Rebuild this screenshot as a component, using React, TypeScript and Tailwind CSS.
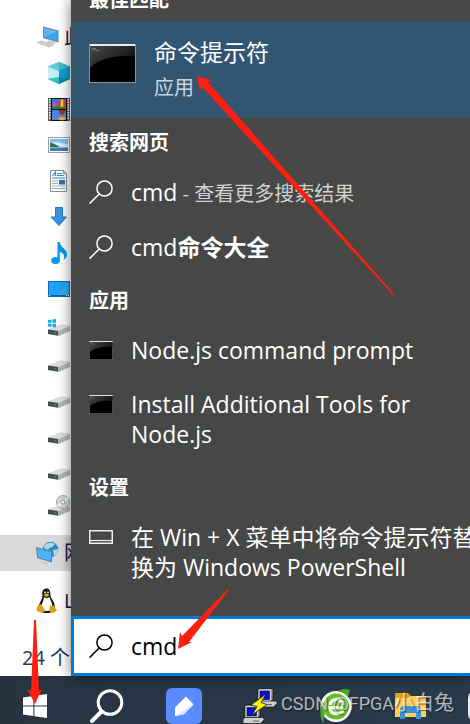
import { useState } from "react";
import type { ReactNode } from "react";

function TerminalIcon({ className }: { className: string }) {
  return (
    <svg viewBox="0 0 47 39" preserveAspectRatio="none" className={className} aria-hidden="true">
      <defs>
        <linearGradient id="gloss" x1="0" y1="0" x2="1" y2=".6">
          <stop offset="0" stopColor="#4a4a4a" />
          <stop offset="1" stopColor="#101010" />
        </linearGradient>
      </defs>
      <rect width="47" height="39" fill="#8d969c" />
      <rect x="1" width="45" height="2" fill="#e6eaec" />
      <rect x="1" y="2" width="45" height="36" fill="#000" />
      <path d="M1 2h45v10C26 11 9 15 1 24z" fill="url(#gloss)" />
      <path d="M3 5h2M6 4v2M7.500 6.500h2" stroke="#aaa" strokeWidth=".8" />
    </svg>
  );
}

function SearchGlyph({ className, strokeWidth = 2 }: { className: string; strokeWidth?: number }) {
  return (
    <svg viewBox="0 0 24 24" fill="none" stroke="currentColor" strokeWidth={strokeWidth} className={className} aria-hidden="true">
      <circle cx="15.5" cy="8.5" r="7.6" />
      <path d="M10.2 14 .5 23.6" />
    </svg>
  );
}

function KeyboardIcon() {
  return (
    <svg viewBox="0 0 24 14" fill="none" stroke="#eee" className="h-3.5 w-6" aria-hidden="true">
      <rect x=".75" y=".75" width="22.5" height="12.5" strokeWidth="1.5" />
      <path d="M1 10.5h22" strokeWidth="1.2" />
    </svg>
  );
}

function PcIcon() {
  return (
    <svg viewBox="0 0 24 24" className="h-6 w-6" aria-hidden="true">
      <path d="M7 1.500 22.500 5.500v12L7 13z" fill="#777f86" />
      <path d="m8 3 13.500 3.500V16L8 12.200z" fill="#35a6f5" />
      <path d="M8 3 21.500 6.500 8 12z" fill="#7ac4fa" opacity=".6" />
      <path d="m12 15 8 2-2 2.500-7-2z" fill="#c3ccd2" />
      <path d="m0 18 6-2.500 12 4.500-5 2.500z" fill="#b3bac0" />
      <path d="m2 18 10 3.500M5 17l10 3.500" stroke="#eef2f4" strokeWidth=".8" />
    </svg>
  );
}

function CubeIcon() {
  return (
    <svg viewBox="0 0 24 24" className="h-6 w-6" aria-hidden="true">
      <path d="m11 1 11 4.500V18l-11 5-11-5V5.500z" fill="#1ba9c4" />
      <path d="M11 1v9L0 5.500z" fill="#5fcbd6" />
      <path d="m11 1 11 4.500L11 10z" fill="#3fbccb" />
      <path d="m0 5.500 11 4.500v7L0 18z" fill="#c4eff0" />
      <path d="m11 10 11-4.500V18l-11-1z" fill="#0f9fd3" />
      <path d="m0 18 11-2v7z" fill="#35bfc4" />
      <path d="m11 16 11 2-11 5z" fill="#0f8a9a" />
    </svg>
  );
}

function FilmIcon() {
  return (
    <svg viewBox="0 0 24 24" className="h-6 w-6" aria-hidden="true">
      <rect y="1" width="22" height="23" fill="#555" />
      <path d="M1.700 2v21M20.300 2v21" stroke="#fff" strokeWidth="1.600" strokeDasharray="1.600 1" />
      <rect x="3" y="1" width="16" height="23" fill="#111" />
      <rect x="4" y="2" width="14" height="10" fill="#2c7be5" />
      <rect x="4" y="13" width="14" height="10" fill="#3b8bf0" />
      <path d="M4 10c4-2 8-1 14 0v2H4z" fill="#2f7f45" />
      <circle cx="6.500" cy="7.500" r="2.300" fill="#e24a8a" />
      <circle cx="14" cy="6.300" r="3.700" fill="#e53d2a" />
      <path d="M14 2.600v7.400" stroke="#ffd21f" strokeWidth="2.500" />
      <path d="M10.500 13h7c0 3-2 4-3.500 5-1.500-1-3.500-2-3.500-5z" fill="#b7252c" />
      <ellipse cx="14" cy="21.500" rx="3.500" ry="1.800" fill="#f3b51d" />
      <circle cx="6" cy="20.500" r="1.500" fill="#f15d30" />
    </svg>
  );
}

function PictureIcon() {
  return (
    <svg viewBox="0 0 24 24" className="h-6 w-6" aria-hidden="true">
      <rect x=".5" y="4.500" width="21" height="15" fill="#fff" stroke="#9aa0a4" />
      <rect x="2" y="6" width="18" height="12" fill="#84bdee" />
      <path d="M2 11c4-3 7-2 11-1s4 1 7 1v4H2z" fill="#d7ebf8" />
      <path d="M2 10c4 0 6 2 10 4H2z" fill="#2e6f5c" />
      <path d="M2 14.500h18V18H2z" fill="#3f80a6" />
    </svg>
  );
}

function DocumentIcon() {
  return (
    <svg viewBox="0 0 24 24" className="h-6 w-6" aria-hidden="true">
      <path d="M2.500 1.500h13l3 3v18h-16z" fill="#fff" stroke="#8c9094" />
      <path d="M15.500 1.500v3h3" fill="none" stroke="#8c9094" />
      <path d="m4.500 7 3-4v4M9 4.500h5M9 6.500h7M4 9h13" stroke="#2b8fd8" strokeWidth="1.200" fill="none" />
      <path d="M4 12h6M4 14.500h6M4 17h13M4 19.500h13" stroke="#a4a7a9" />
      <rect x="11" y="11" width="6" height="4.500" fill="#3472ae" />
    </svg>
  );
}

function DownloadIcon() {
  return (
    <svg viewBox="0 0 24 24" className="h-6 w-6" aria-hidden="true">
      <path d="M7.500 2.500h7v9.500h4L11 20.500 3 12h4.500z" fill="#3b95e4" stroke="#2379c7" />
    </svg>
  );
}

function MusicIcon() {
  return (
    <svg viewBox="0 0 24 24" className="h-6 w-6" aria-hidden="true">
      <ellipse cx="7.500" cy="19.500" rx="4.300" ry="3.500" fill="#0a98ee" />
      <path d="M9.500 1h2.300c0 5 7.200 7 7.200 12 0 3-1 4.500-3.500 6 2-5-.5-7-3.700-8v9H9.500z" fill="#0a98ee" />
    </svg>
  );
}

function DesktopIcon() {
  return (
    <svg viewBox="0 0 24 24" className="h-6 w-6" aria-hidden="true">
      <rect x=".5" y="4.500" width="21" height="15" fill="#21a3f8" stroke="#0d6cb4" />
      <path d="M21 5v13H10z" fill="#45b5ff" opacity=".5" />
      <path d="M1 18.500h20" stroke="#0b5b98" />
      <path d="M1 18.500h1M18 18.500h1M20 18.500h1" stroke="#fff" />
    </svg>
  );
}

function DriveIcon({ badge }: { badge?: "windows" | "disc" }) {
  return (
    <svg viewBox="0 0 24 24" className="h-6 w-6" aria-hidden="true">
      <path d="m0 16.500 13-5 9 1.500v5l-11 5-11-2z" fill="#b4b5b8" />
      <path d="m0 16.500 13-5 9 1.500-11.500 5z" fill="#dcdde0" />
      <path d="m0 16.500 10 1.500v4.500L0 21z" fill="#48494b" />
      <path d="M6.500 20h2" stroke="#35c535" strokeWidth="1.200" />
      {badge === "windows" && (
        <path d="m0 7 3.500-.5v3.300H0zM4.500 6.400 8 6v3.800H4.500zM0 10.700h3.500V14L0 13.500zM4.500 10.700H8v3.900l-3.500-.5z" fill="#11aef2" />
      )}
      {badge === "disc" && (
        <>
          <circle cx="15" cy="9" r="6.500" fill="#d3d9da" stroke="#9fa6a8" />
          <path d="m15 9 5-4M15 9l-5 4" stroke="#f4f6f6" strokeWidth="2" />
          <circle cx="15" cy="9" r="2" fill="#fff" stroke="#959b9d" />
        </>
      )}
    </svg>
  );
}

function NetworkIcon() {
  return (
    <svg viewBox="0 0 24 24" className="h-6 w-6" aria-hidden="true">
      <circle cx="14.500" cy="8.500" r="7.800" fill="#348ab9" />
      <path d="M8 5c3-4 8-4 11-2l-3 3-3 1-1 2-4-2zM17 9l5-1c0 4-2 6-4 7z" fill="#a5dbed" />
      <path d="m0 6 16 4v11.500L1 17z" fill="#6c7c88" />
      <path d="m1 7.300 14 3.600v9.300L2 16.200z" fill="#4cb3f8" />
      <path d="m5 20 7 1.500v2l-7-1z" fill="#c5ced4" />
    </svg>
  );
}

function TuxIcon() {
  return (
    <svg viewBox="0 0 24 26" className="h-[26px] w-6" aria-hidden="true">
      <path d="M6.500 7c-1-4 1-6.500 4-6.500s4 2.500 4 6.500 5 7 4.500 13c0 3-3 5-8.500 5S2.500 23 2.500 20c0-5 4-8 4-13z" fill="#151515" />
      <path d="M8 9c2 1.500 3.500 1.500 5.500 0 1 4 3 6 3 10 0 3-3 4-6 4s-5-1-5-4c0-4 2.500-6 2.500-10z" fill="#fff" />
      <circle cx="9" cy="4.500" r="1.100" fill="#ccc" />
      <circle cx="12" cy="4.500" r="1.100" fill="#ccc" />
      <path d="m7.500 7 3-1.500 3 1.500-3 2.300z" fill="#eeb01b" />
      <path d="m2 17 3-1 4 6c0 2-2 3-4 2.500L.5 23c-.5-2 1-3 1.500-6z" fill="#d6a11c" />
      <path d="m14 17 2 1.500 2.500-1.500.5 3 2 2c-1 1-3 3-5.500 3-2.500 0-2-4-1.500-8z" fill="#d6a11c" />
    </svg>
  );
}

const TREE: { id: string; icon: ReactNode }[] = [
  { id: "objects", icon: <CubeIcon /> },
  { id: "videos", icon: <FilmIcon /> },
  { id: "pictures", icon: <PictureIcon /> },
  { id: "documents", icon: <DocumentIcon /> },
  { id: "downloads", icon: <DownloadIcon /> },
  { id: "music", icon: <MusicIcon /> },
  { id: "desktop", icon: <DesktopIcon /> },
  { id: "c", icon: <DriveIcon badge="windows" /> },
  { id: "d", icon: <DriveIcon /> },
  { id: "e", icon: <DriveIcon /> },
  { id: "f", icon: <DriveIcon /> },
  { id: "g", icon: <DriveIcon /> },
  { id: "dvd", icon: <DriveIcon badge="disc" /> },
];

function RootNode({ icon, label, selected }: { icon: ReactNode; label: string; selected?: boolean }) {
  return (
    <li className={selected ? "flex h-9 items-center gap-1 bg-[#d9d9d9] pl-9" : "flex h-9 items-center gap-1 pl-9"}>
      <span className="shrink-0">{icon}</span>
      <span className="whitespace-nowrap text-xl text-[#101540]">{label}</span>
    </li>
  );
}

function Explorer() {
  return (
    <aside className="flex w-[71px] shrink-0 flex-col overflow-hidden bg-white pt-[19px]">
      <ul>
        <RootNode icon={<PcIcon />} label="此电脑" />
        {TREE.map((t) => (
          <li key={t.id} className="flex h-9 items-center pl-12">
            <span className="shrink-0">{t.icon}</span>
          </li>
        ))}
      </ul>
      <ul className="flex flex-col gap-3 pt-3">
        <RootNode icon={<NetworkIcon />} label="网络" selected />
        <RootNode icon={<TuxIcon />} label="Linux" />
      </ul>
      <p className="mt-auto h-9 whitespace-nowrap pl-[22px] text-xl leading-9 text-[#1e3958]">24 个项目</p>
    </aside>
  );
}

function GroupTitle({ children }: { children: ReactNode }) {
  return <h2 className="flex h-[49px] items-center pl-[18px] text-xl font-bold">{children}</h2>;
}

function ResultRow({ icon, children }: { icon: ReactNode; children: ReactNode }) {
  return (
    <button type="button" className="flex w-full items-start gap-[18px] whitespace-nowrap pb-3.5 pl-[18px] pt-2.5 text-left text-[23px] leading-[30px]">
      <span className="flex h-[30px] w-6 shrink-0 items-center">{icon}</span>
      <span>{children}</span>
    </button>
  );
}

function SearchPanel() {
  const [query, setQuery] = useState("cmd");
  return (
    <main className="z-10 flex min-w-0 flex-1 flex-col bg-linear-to-r from-[#454748] to-[#484745] text-white shadow-[0_0_12px_rgba(0,0,0,0.55)]">
      <div className="flex flex-1 flex-col overflow-hidden">
        <div className="flex h-[22px] shrink-0 items-end overflow-hidden pl-[18px]">
          <h2 className="pb-2 text-xl font-bold leading-7">最佳匹配</h2>
        </div>
        <button type="button" className="flex h-24 w-full items-start gap-[18px] bg-[#325672] pl-[18px] pt-3.5 text-left">
          <TerminalIcon className="mt-2 h-[39px] w-[47px]" />
          <span className="flex flex-col">
            <span className="text-[23px] leading-8">命令提示符</span>
            <span className="mt-1 text-xl leading-8 text-[#cbd5dd]">应用</span>
          </span>
        </button>

        <GroupTitle>搜索网页</GroupTitle>
        <ResultRow icon={<SearchGlyph className="h-6 w-6" strokeWidth={1.5} />}>
          cmd<span className="text-xl text-[#d0d0d0]"> - 查看更多搜索结果</span>
        </ResultRow>
        <ResultRow icon={<SearchGlyph className="h-6 w-6" strokeWidth={1.5} />}>
          cmd<b>命令大全</b>
        </ResultRow>

        <GroupTitle>应用</GroupTitle>
        <ResultRow icon={<TerminalIcon className="h-[19px] w-6" />}>Node.js command prompt</ResultRow>
        <ResultRow icon={<TerminalIcon className="h-[19px] w-6" />}>
          Install Additional Tools for
          <br />
          Node.js
        </ResultRow>

        <GroupTitle>设置</GroupTitle>
        <ResultRow icon={<KeyboardIcon />}>
          在 Win + X 菜单中将命令提示符替
          <br />
          换为 Windows PowerShell
        </ResultRow>
      </div>

      <label className="flex h-[60px] shrink-0 items-center gap-[18px] border-y-[3px] border-l-[3px] border-[#0078d7] bg-white pl-[15px] text-black">
        <SearchGlyph className="h-6 w-6 shrink-0" strokeWidth={1.5} />
        <input
          type="text"
          aria-label="搜索"
          value={query}
          onChange={(e) => setQuery(e.target.value)}
          className="h-full min-w-0 flex-1 bg-transparent text-[23px] outline-none"
        />
      </label>
    </main>
  );
}

function PuttyComputer() {
  return (
    <>
      <path d="M3 1.500 5 .5h13v11l-2 1.500H3z" fill="#9a9a9a" stroke="#111" strokeWidth=".7" />
      <path d="M3.500 1.500H16V13H3.500z" fill="#d6d6d6" />
      <rect x="5" y="3" width="9.500" height="8.500" fill="#0810d8" stroke="#111" strokeWidth=".6" />
      <path d="m1 15 2-2h17l2 .5v2L18.500 19H1z" fill="#cfcfcf" stroke="#111" strokeWidth=".7" />
      <path d="M11 16.500h6" stroke="#444" strokeWidth=".8" />
    </>
  );
}

function Taskbar() {
  return (
    <nav className="flex h-12 shrink-0 items-center gap-10 overflow-hidden bg-linear-to-r from-[#273341] to-[#293b4b] pl-[22px] text-white">
      <button type="button" aria-label="开始" className="mt-3 shrink-0">
        <svg viewBox="0 0 26 26" className="h-[26px] w-[26px]" aria-hidden="true">
          <path d="M1 4.400 11.400 3v9.400H1zM12.400 2.800 25 1v11.400H12.400zM1 13.500h10.400V23L1 21.600zM12.400 13.500H25V25l-12.600-1.800z" fill="#fff" />
        </svg>
      </button>
      <button type="button" aria-label="搜索" className="ml-0.5 mt-3 shrink-0">
        <svg viewBox="0 0 34 34" fill="none" stroke="#fff" className="h-[34px] w-[34px]" aria-hidden="true">
          <circle cx="20" cy="13.500" r="11.800" strokeWidth="3" />
          <path d="M11.500 22.500 2 32" strokeWidth="4" strokeLinecap="round" />
        </svg>
      </button>
      <button type="button" aria-label="笔记" className="ml-0.5 mt-3 flex h-9 w-9 shrink-0 items-center justify-center rounded-md bg-[#5b8bff]">
        <svg viewBox="0 0 20 22" className="h-[22px] w-5" aria-hidden="true">
          <path d="M12 1.500 19.500 9.500 9.500 19.500 1 21V12.500z" fill="#fff" />
          <path d="M19.500 9.500 9.500 19.500 1 21z" fill="#dce5ff" />
        </svg>
      </button>
      <button type="button" aria-label="PuTTY" className="mt-3 shrink-0">
        <svg viewBox="0 0 36 36" className="h-9 w-9" aria-hidden="true">
          <g transform="translate(13 0)"><PuttyComputer /></g>
          <g transform="translate(0 16.500)"><PuttyComputer /></g>
          <path d="M24 6 9 17l6 1.500L10 27l15-10.500-6-2z" fill="#fff200" stroke="#222" strokeWidth=".8" />
        </svg>
      </button>
      <button type="button" aria-label="浏览器" className="mt-3 shrink-0">
        <svg viewBox="0 0 36 36" className="h-9 w-9" aria-hidden="true">
          <circle cx="18" cy="18.500" r="15.500" fill="#fff" />
          <circle cx="18" cy="18.500" r="13" fill="#63bd29" />
          <path d="M25 19.500H12c0 7 9 8 13 3M12 17c1-7.500 12-7.500 13 0" fill="none" stroke="#fff" strokeWidth="3.200" />
          <path d="M20 3c4-2 8-3 12-1-1 3-1 5-3 8 0-4-3-6-9-7z" fill="#48ad20" />
          <path d="M4 15C1 25 3 33 6 35c-1-4 0-7 1-9z" fill="#48ad20" />
        </svg>
      </button>
      <button type="button" aria-label="文件资源管理器" className="mt-3 shrink-0">
        <svg viewBox="0 0 34 30" className="h-[30px] w-[34px]" aria-hidden="true">
          <path d="M1 2h13l3 3h15v6H1z" fill="#e79b16" />
          <path d="M1 7h13l3-2h15v21H1z" fill="#ffce55" />
          <path d="M6 28v-9c0-3 2-4 4-4h13c3 0 4 2 4 4v9h-5v-6H11v6z" fill="#3793df" />
        </svg>
      </button>
      <span className="mt-3 h-8 w-8 shrink-0 rounded-lg bg-[#e8ebee]" />
    </nav>
  );
}

function Arrows() {
  return (
    <svg viewBox="0 0 470 724" fill="#ff1f10" className="pointer-events-none absolute left-0 top-0 z-20 h-[724px] w-[470px]" aria-hidden="true">
      <path d="M197 76 212 80 208 82 395 295 394 296 202 87 200 91z" />
      <path d="M178 649 180 632 182 636 228 589 229 590 189 642 192 642z" />
      <path d="M35 704 27 689 31 691 34 620H36L39 691 42 689z" />
    </svg>
  );
}

export default function App() {
  return (
    <div className="relative flex min-h-screen flex-col overflow-hidden bg-white [font-family:'Open_Sans','Noto_Sans_CJK_SC',sans-serif]">
      <div className="flex flex-1">
        <Explorer />
        <SearchPanel />
      </div>
      <Taskbar />
      <Arrows />
      <p className="pointer-events-none absolute bottom-1 right-4 z-30 whitespace-nowrap text-lg leading-8 text-white/65 [font-family:Roboto,'Noto_Sans_CJK_SC',sans-serif] [text-shadow:1px_1px_1px_rgba(0,0,0,0.5)]">
        CSDN @FPGA<span className="text-xl">小白兔</span>
      </p>
    </div>
  );
}
